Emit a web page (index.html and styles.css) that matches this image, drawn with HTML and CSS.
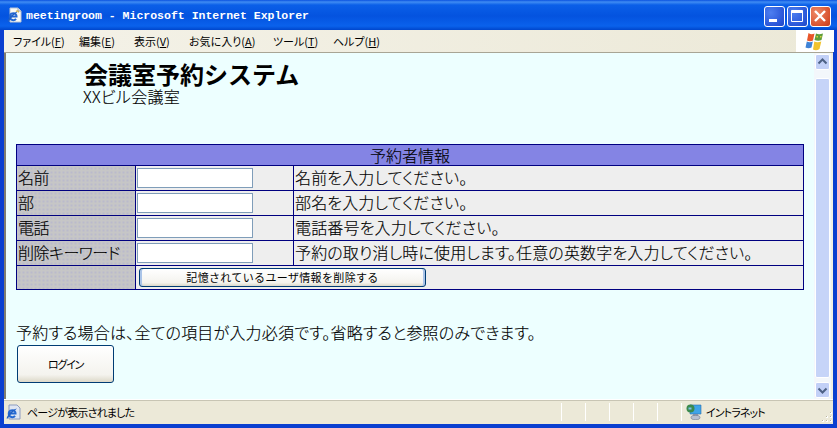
FILE: index.html
```html
<!DOCTYPE html>
<html lang="ja">
<head>
<meta charset="utf-8">
<title>meetingroom - Microsoft Internet Explorer</title>
<link rel="stylesheet" href="styles.css">
</head>
<body>
<div class="window">
  <header class="titlebar">
    <svg class="ie-icon" viewBox="0 0 16 16" width="16" height="16"><path d="M3 1h8l3 3v11H3z" fill="#fbfbf6" stroke="#b9c4d6"/><path d="M11 1v3h3" fill="#dfe4ec" stroke="#9aa6ba"/><path d="M2.500 9.500h8M9.500 8.500A3.500 3.500 0 1 0 9 11.800" fill="none" stroke="#2468d2" stroke-width="2"/><path d="M0.500 14.500C2 10 6 5.500 11 4.500 9 6 4 10.500 1.800 14.500z" fill="#1f5fc4"/><path d="M9 4.500c1.500-1 2.500-.5 2.500 1" fill="none" stroke="#d8b040" stroke-width="1.200"/></svg>
    <span class="title-text">meetingroom - Microsoft Internet Explorer</span>
    <div class="win-buttons">
      <div class="win-btn"><svg viewBox="0 0 21 21" width="21" height="21"><path d="M5 13h8v3H5z" fill="#fff"/></svg></div>
      <div class="win-btn"><svg viewBox="0 0 21 21" width="21" height="21"><path d="M4.500 4.500h11v11h-11z" fill="none" stroke="#fff"/><path d="M4.500 4.500h11v2.500h-11z" fill="#fff"/></svg></div>
      <div class="win-btn close"><svg viewBox="0 0 21 21" width="21" height="21"><path d="M5 5l10 10M15 5L5 15" stroke="#fff" stroke-width="2.400"/></svg></div>
    </div>
  </header>
  <nav class="menubar">
    <div class="menu-list">
      <span class="menu-item">ファイル(<u>F</u>)</span>
      <span class="menu-item">編集(<u>E</u>)</span>
      <span class="menu-item">表示(<u>V</u>)</span>
      <span class="menu-item">お気に入り(<u>A</u>)</span>
      <span class="menu-item">ツール(<u>T</u>)</span>
      <span class="menu-item">ヘルプ(<u>H</u>)</span>
    </div>
    <div class="flag-box">
      <svg viewBox="0 0 20 19" width="20" height="19"><path d="M3.500 1c2 1.500 4 1.500 6 .5L8 8.500C6 9.500 4 9.500 2 8.500z" fill="#e8562a"/><path d="M11 1.500c2 1 4 1 7 0L16.500 8c-2 1-4.500 1-7 0z" fill="#5f9e3a"/><path d="M11.500 4h1.500v1.500h-1.500zM15 4h1.500v1.500H15z" fill="#d8d040"/><path d="M1.800 9.500c2 1 4 1 6 0L6.500 15.500c-2 1-4 1-6 0z" fill="#3f83d6"/><path d="M9.300 9.500c2 1 4.500 1 7 0L14.500 17c-2 1.500-4.500 1.500-6.500 .5z" fill="#f2c32e"/></svg>
    </div>
  </nav>
  <div class="viewport">
    <main class="page">
      <h1 class="heading">会議室予約システム</h1>
      <p class="subheading">XXビル会議室</p>
      <table class="form-table">
        <colgroup><col class="col-label"><col class="col-field"><col class="col-hint"></colgroup>
        <tr><th colspan="3" class="table-head">予約者情報</th></tr>
        <tr><td class="label">名前</td><td class="field"><input class="text-input" type="text"></td><td class="hint">名前を入力してください。</td></tr>
        <tr><td class="label">部</td><td class="field"><input class="text-input" type="text"></td><td class="hint">部名を入力してください。</td></tr>
        <tr><td class="label">電話</td><td class="field"><input class="text-input" type="text"></td><td class="hint">電話番号を入力してください。</td></tr>
        <tr><td class="label">削除キーワード</td><td class="field"><input class="text-input" type="text"></td><td class="hint">予約の取り消し時に使用します。任意の英数字を入力してください。</td></tr>
        <tr class="action-row"><td class="label"></td><td colspan="2" class="action"><button class="clear-btn" type="button">記憶されているユーザ情報を削除する</button></td></tr>
      </table>
      <p class="notice">予約する場合は、全ての項目が入力必須です。省略すると参照のみできます。</p>
      <button class="login-btn" type="button">ログイン</button>
    </main>
    <aside class="scrollbar">
      <div class="scroll-btn"><svg viewBox="0 0 15 16" width="15" height="16"><path d="M3.500 9.500l4-4 4 4" fill="none" stroke="#4d6185" stroke-width="2"/></svg></div>
      <div class="scroll-track"><div class="scroll-thumb"></div></div>
      <div class="scroll-btn"><svg viewBox="0 0 15 16" width="15" height="16"><path d="M3.500 6.500l4 4 4-4" fill="none" stroke="#4d6185" stroke-width="2"/></svg></div>
    </aside>
  </div>
  <footer class="statusbar">
    <svg class="status-ie" viewBox="0 0 16 16" width="16" height="16"><path d="M3 1h8l3 3v11H3z" fill="#dfe6f2" stroke="#8d9cc0"/><path d="M2.500 9.500h8M9.500 8.500A3.500 3.500 0 1 0 9 11.800" fill="none" stroke="#2468d2" stroke-width="2"/><path d="M0.500 14.500C2 10 6 5.500 11 4.500 9 6 4 10.500 1.800 14.500z" fill="#1f5fc4"/></svg>
    <span class="status-text">ページが表示されました</span>
    <div class="status-cells">
      <span class="status-cell"></span><span class="status-cell"></span><span class="status-cell"></span><span class="status-cell"></span><span class="status-cell"></span>
    </div>
    <div class="status-zone">
      <svg viewBox="0 0 16 16" width="16" height="16"><path d="M4 1h11v9H4z" fill="#3fa4e8" stroke="#2a6fb0" stroke-width=".6"/><circle cx="4.500" cy="4.500" r="4" fill="#3b8a4e"/><path d="M2.500 3.500h3v2h-3z" fill="#7fc0e8"/><path d="M7 10h5v2H7z" fill="#8a94a8"/><ellipse cx="9.500" cy="13.500" rx="4.500" ry="2.200" fill="#b8c0d0" stroke="#6a7488" stroke-width=".6"/></svg>
      <span class="zone-text">イントラネット</span>
      <svg class="grip" viewBox="0 0 11 11" width="11" height="11"><path d="M8 0h2v2H8zM4 4h2v2H4zM8 4h2v2H8zM0 8h2v2H0zM4 8h2v2H4zM8 8h2v2H8z" fill="#fff"/><path d="M8 0h1v1H8zM4 4h1v1H4zM8 4h1v1H8zM0 8h1v1H0zM4 8h1v1H4zM8 8h1v1H8z" fill="#b8b4a0"/></svg>
    </div>
  </footer>
</div>
</body>
</html>
```
FILE: styles.css
```css
* { box-sizing: border-box; }
html, body { margin: 0; padding: 0; }
body {
  width: 837px;
  height: 428px;
  overflow: hidden;
  font-family: "Noto Sans CJK JP", "Liberation Sans", sans-serif;
  font-feature-settings: "palt";
  color: #000;
}
.window {
  width: 837px;
  height: 428px;
  display: flex;
  flex-direction: column;
  background: #0a3fd0;
  padding: 0 4px 4px;
}
.titlebar {
  flex: none;
  height: 30px;
  margin: 0 -4px;
  padding: 2px 6px 0 7px;
  display: flex;
  align-items: center;
  background: linear-gradient(#0a52e0 0, #3f8cf3 2px, #0a5fe8 5px, #0453df 16px, #0a62ec 26px, #0046cc 30px);
}
.ie-icon { flex: none; margin-top: -2px; }
.title-text {
  margin-left: 3px;
  margin-top: -2px;
  font: bold 11.500px "Liberation Mono", monospace;
  color: #fff;
  white-space: pre;
}
.win-buttons { margin-left: auto; display: flex; gap: 2px; }
.win-btn {
  width: 21px;
  height: 21px;
  border: 1px solid #fff;
  border-radius: 3px;
  background: radial-gradient(circle at 30% 30%, #4d7ff0, #2a56d8 70%, #1f47c4);
  display: flex;
  align-items: center;
  justify-content: center;
}
.win-btn svg { flex: none; }
.win-btn.close { background: radial-gradient(circle at 30% 30%, #ee8a68, #d8512e 70%, #c23c1a); }
.menubar {
  flex: none;
  height: 23px;
  background: linear-gradient(90deg, #f4f2e8, #ece9d8);
  display: flex;
  align-items: center;
  padding-left: 9px;
  font-size: 11px;
  border-bottom: 1px solid #a8a595;
}
.menu-list {
  display: grid;
  grid-template-columns: 66px 55px 55px 84px 60px 60px;
}
.menu-item { white-space: nowrap; }
.flag-box {
  margin-left: auto;
  margin-right: -1px;
  width: 38px;
  height: 22px;
  background: #fff;
  display: flex;
  align-items: center;
  justify-content: center;
}
.viewport {
  flex: 1;
  min-height: 0;
  display: flex;
  background: #edffff;
  border-left: 2px solid #7f7d70;
  border-right: 2px solid #f2f0e4;
}
.page {
  flex: 1;
  min-width: 0;
  padding: 8px 0 0 10px;
  -webkit-text-stroke: .15px #000;
}
.heading {
  margin: 0 0 0 68px;
  font-size: 24px;
  line-height: 26px;
  font-weight: 700;
  font-feature-settings: normal;
  -webkit-text-stroke: 0;
}
.subheading {
  margin: 0 0 0 67px;
  font-size: 16px;
  line-height: 18px;
  font-weight: 300;
  letter-spacing: .3px;
}
.form-table {
  margin-top: 39px;
  width: 787px;
  border-collapse: collapse;
  table-layout: fixed;
  font-size: 16px;
  font-weight: 300;
}
.col-label { width: 119px; }
.col-field { width: 158px; }
.col-hint { width: 510px; }
.form-table td, .form-table th {
  border: 1px solid #000080;
  padding: 0 0 2px 1px;
  height: 25px;
  line-height: 20px;
  font-weight: 300;
  background: #eeeeee;
  white-space: nowrap;
}
.form-table .table-head { height: 21px; background: #8484e4; text-align: center; padding: 0; }
.form-table .label {
  background-color: #c6c6c6;
  background-image: radial-gradient(#b4b4d0 .6px, transparent .9px);
  background-size: 4px 4px;
  letter-spacing: -.5px;
}
.form-table .field { padding: 0 0 0 1px; }
.form-table .hint { letter-spacing: .15px; }
.form-table .action { padding: 0 0 1px 3px; }
.action-row td { height: 24px; }
.text-input {
  display: block;
  width: 116px;
  height: 20px;
  border: 1px solid #7f9db9;
  background: #fff;
  padding: 0;
}
.clear-btn {
  display: block;
  width: 287px;
  height: 19px;
  padding: 0;
  font: 11px "Noto Sans CJK JP", sans-serif;
  letter-spacing: .35px;
  -webkit-text-stroke: 0;
  border: 1px solid #003c74;
  border-radius: 3px;
  background: linear-gradient(#fff, #f4f3ee 80%, #dcd8c8);
  box-shadow: inset 2px 0 0 #aac4e8, inset -2px 0 0 #aac4e8;
}
.notice {
  margin: 31px 0 0;
  font-size: 16px;
  line-height: 22px;
  font-weight: 300;
  letter-spacing: .2px;
}
.login-btn {
  display: block;
  margin: 2px 0 0 1px;
  width: 97px;
  height: 38px;
  padding: 0;
  font: 11px "Noto Sans CJK JP", sans-serif;
  font-feature-settings: "palt";
  letter-spacing: -1.2px;
  -webkit-text-stroke: 0;
  border: 1px solid #003c74;
  border-radius: 3px;
  background: linear-gradient(#fff, #f4f3ee 80%, #dcd8c8);
}
.scrollbar {
  flex: none;
  width: 17px;
  display: flex;
  flex-direction: column;
  background: #f3f7fb;
  padding: 1px;
}
.scroll-btn {
  flex: none;
  height: 16px;
  border: 1px solid #fff;
  border-radius: 2px;
  background: #c2d0f7;
  display: flex;
  align-items: center;
  justify-content: center;
}
.scroll-btn svg { flex: none; }
.scroll-track { flex: 1; min-height: 0; padding: 8px 0 4px; }
.scroll-thumb {
  height: 100%;
  border: 1px solid #fff;
  border-radius: 2px;
  background: #c6d4f8;
}
.statusbar {
  flex: none;
  height: 25px;
  background: #ece9d8;
  box-shadow: inset 0 1px 0 #c8c5b4;
  display: flex;
  align-items: center;
  font-size: 11px;
  padding: 0 0 0 2px;
  border-top: 1px solid #fff;
}
.status-ie { flex: none; }
.status-text { margin-left: 5px; letter-spacing: -.8px; }
.status-cells { margin-left: auto; display: flex; }
.status-cell { width: 24px; height: 18px; border-left: 1px solid #fff; }
.status-zone {
  width: 152px;
  height: 18px;
  border-left: 1px solid #fff;
  display: flex;
  align-items: center;
  gap: 4px;
  padding-left: 4px;
}
.status-zone svg { flex: none; }
.zone-text { letter-spacing: -.9px; }
.status-zone .grip { margin: auto 0 -2px auto; }
```
